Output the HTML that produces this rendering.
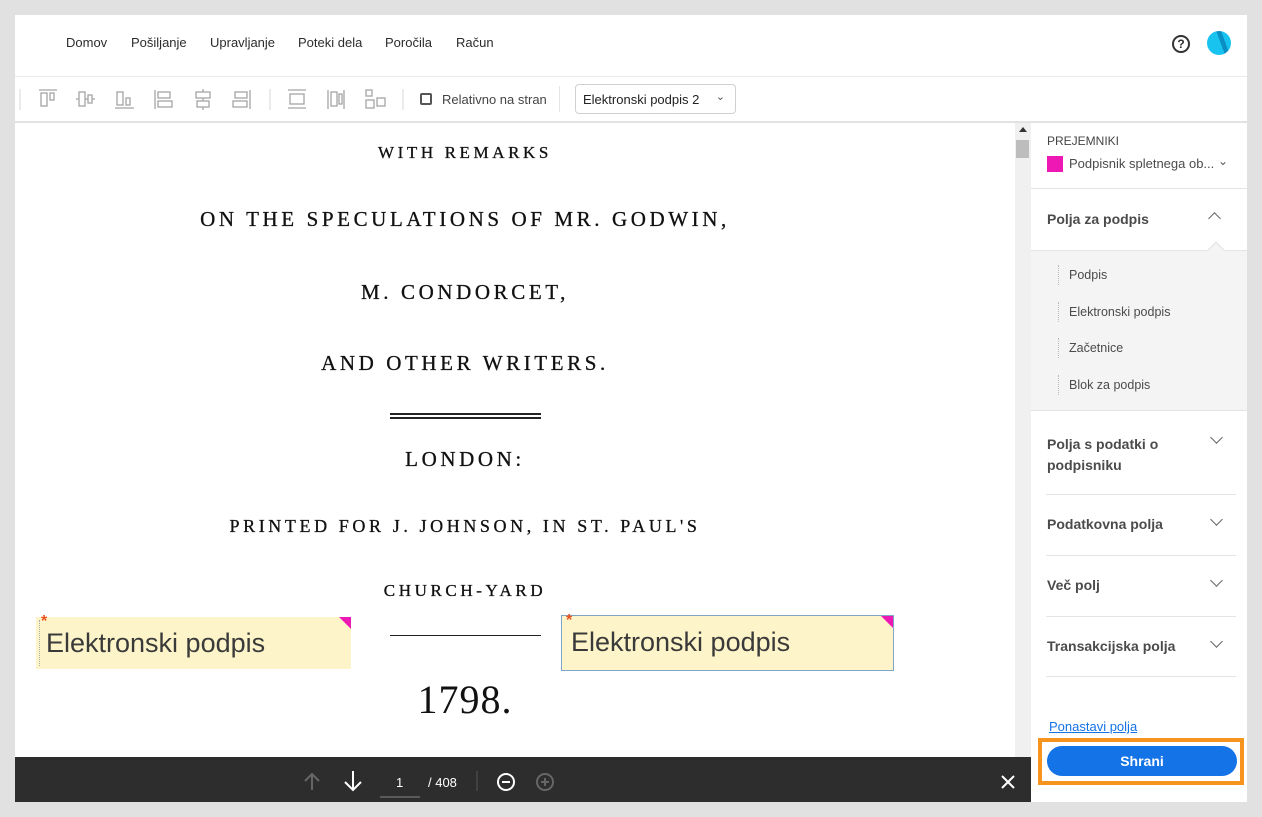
<!DOCTYPE html>
<html><head><meta charset="utf-8"><style>
*{margin:0;padding:0;box-sizing:border-box}
body{width:1262px;height:817px;background:#e1e1e1;position:relative;overflow:hidden;font-family:"Liberation Sans",sans-serif;color:#2c2c2c}
.abs{position:absolute}
.nav span{position:absolute;top:35px;font-size:13px;color:#2c2c2c}
.doc{font-family:"Liberation Serif",serif;color:#111;position:absolute;left:15px;width:900px;text-align:center;letter-spacing:3.6px;-webkit-text-stroke:0.3px #111}
.side{font-size:14px;color:#4b4b4b}
</style></head><body>
<div class="abs" style="left:15px;top:15px;width:1232px;height:62px;background:#fff;border-bottom:1px solid #eaeaea"></div>
<div class="nav">
<span style="left:66px">Domov</span><span style="left:131px">Pošiljanje</span><span style="left:210px">Upravljanje</span><span style="left:298px">Poteki dela</span><span style="left:385px">Poročila</span><span style="left:456px">Račun</span>
</div>
<div class="abs" style="left:1172px;top:35px;width:18px;height:18px;border:2px solid #333;border-radius:50%;font-size:12px;font-weight:bold;text-align:center;line-height:14px">?</div>
<div class="abs" style="left:1207px;top:31px;width:24px;height:24px;border-radius:50%;background:linear-gradient(70deg,#19c3f0 55%,#0a8fc4 55%,#0a8fc4 70%,#19c3f0 70%)"></div>
<div class="abs" style="left:15px;top:77px;width:1232px;height:45px;background:#fff;border-bottom:1px solid #e4e4e4"></div>
<svg class="abs" style="left:15px;top:77px" width="400" height="45" stroke="#a5a5a5" fill="none" stroke-width="1.3">
<line x1="5" y1="12" x2="5" y2="33" stroke="#e0e0e0"/>
<line x1="24" y1="13" x2="42" y2="13"/><rect x="26" y="16" width="6" height="13"/><rect x="35" y="16" width="4" height="7"/>
<line x1="61" y1="22" x2="80" y2="22"/><rect x="64" y="15" width="6" height="14" fill="#fff"/><rect x="73" y="18" width="4" height="8" fill="#fff"/>
<line x1="100" y1="31" x2="119" y2="31"/><rect x="102" y="15" width="6" height="13"/><rect x="111" y="21" width="4" height="7"/>
<line x1="140" y1="13" x2="140" y2="32"/><rect x="143" y="15" width="12" height="6"/><rect x="143" y="24" width="14" height="6"/>
<line x1="188" y1="12" x2="188" y2="33"/><rect x="181" y="15" width="14" height="6" fill="#fff"/><rect x="182" y="24" width="12" height="6" fill="#fff"/>
<line x1="235" y1="13" x2="235" y2="32"/><rect x="220" y="15" width="12" height="6"/><rect x="218" y="24" width="14" height="6"/>
<line x1="255" y1="12" x2="255" y2="33" stroke="#e0e0e0"/>
<line x1="273" y1="13" x2="291" y2="13"/><line x1="273" y1="31" x2="291" y2="31"/><rect x="275" y="17" width="14" height="10"/>
<line x1="313" y1="13" x2="313" y2="32"/><line x1="329" y1="13" x2="329" y2="32"/><rect x="316" y="15" width="6" height="14"/><rect x="324" y="17" width="3" height="10"/>
<rect x="351" y="13" width="6" height="6"/><rect x="351" y="23" width="8" height="8"/><rect x="362" y="21" width="8" height="8"/>
<line x1="388" y1="12" x2="388" y2="33" stroke="#e0e0e0"/>
</svg>
<div class="abs" style="left:420px;top:93px;width:12px;height:12px;border:2px solid #555;border-radius:2px"></div>
<div class="abs" style="left:442px;top:92px;font-size:13px;color:#444">Relativno na stran</div>
<div class="abs" style="left:559px;top:86px;width:1px;height:26px;background:#e4e4e4"></div>
<div class="abs" style="left:575px;top:84px;width:161px;height:30px;border:1px solid #d0d0d0;border-radius:4px;background:#fff;font-size:13px;padding:7px 7px;color:#222">Elektronski podpis 2<span style="position:absolute;right:10px;top:5px;color:#555;font-size:11px">&#8964;</span></div>
<div class="abs" style="left:15px;top:123px;width:1000px;height:634px;background:#fff"></div>
<div class="abs" style="left:1015px;top:123px;width:16px;height:634px;background:#f0f0f0"></div>
<div class="abs" style="left:1016px;top:140px;width:13px;height:18px;background:#bdbdbd"></div>
<div class="abs" style="left:1019px;top:127px;width:0;height:0;border-left:4px solid transparent;border-right:4px solid transparent;border-bottom:5px solid #333"></div>
<div class="doc" style="top:143px;font-size:17px">WITH REMARKS</div>
<div class="doc" style="top:207px;font-size:21px">ON THE SPECULATIONS OF MR. GODWIN,</div>
<div class="doc" style="top:280px;font-size:21px">M. CONDORCET,</div>
<div class="doc" style="top:351px;font-size:21px">AND OTHER WRITERS.</div>
<div class="abs" style="left:390px;top:413px;width:151px;height:2px;background:#222"></div>
<div class="abs" style="left:390px;top:417px;width:151px;height:2px;background:#222"></div>
<div class="doc" style="top:447px;font-size:21px">LONDON:</div>
<div class="doc" style="top:516px;font-size:18px">PRINTED FOR J. JOHNSON, IN ST. PAUL'S</div>
<div class="doc" style="top:581px;font-size:17px">CHURCH-YARD</div>
<div class="abs" style="left:390px;top:635px;width:151px;height:1px;background:#222"></div>
<div class="doc" style="top:676px;font-size:40px;letter-spacing:1px;-webkit-text-stroke:0">1798.</div>
<div class="abs" style="left:36px;top:617px;width:315px;height:52px;background:#fdf5c9"></div>
<div class="abs" style="left:39px;top:620px;width:1px;height:46px;border-left:1px dotted #aaa"></div>
<div class="abs" style="left:41px;top:613px;color:#e8521f;font-size:16px;font-weight:bold">*</div>
<div class="abs" style="left:46px;top:628px;font-size:27px;color:#3a3a3a">Elektronski podpis</div>
<div class="abs" style="left:339px;top:617px;border-top:12px solid #ee18b4;border-left:12px solid transparent"></div>
<div class="abs" style="left:561px;top:615px;width:333px;height:56px;background:#fdf5c9;border:1px solid #7fa6c9"></div>
<div class="abs" style="left:566px;top:612px;color:#e8521f;font-size:16px;font-weight:bold">*</div>
<div class="abs" style="left:571px;top:627px;font-size:27px;color:#3a3a3a">Elektronski podpis</div>
<div class="abs" style="left:881px;top:616px;border-top:12px solid #ee18b4;border-left:12px solid transparent"></div>
<div class="abs" style="left:15px;top:757px;width:1016px;height:45px;background:#2d2d2d"></div>
<svg class="abs" style="left:15px;top:757px" width="1016" height="45" fill="none" stroke-width="2">
<path d="M297 33V17M290 24l7-7 7 7" stroke="#666"/>
<path d="M338 14v18M330 25l8 8 8-8" stroke="#fff"/>
<line x1="365" y1="40" x2="405" y2="40" stroke="#888" stroke-width="1"/>
<line x1="462" y1="14" x2="462" y2="34" stroke="#555" stroke-width="1"/>
<circle cx="491" cy="25" r="8" stroke="#fff"/><line x1="487" y1="25" x2="495" y2="25" stroke="#fff"/>
<circle cx="530" cy="25" r="8" stroke="#666"/><path d="M526 25h8M530 21v8" stroke="#666"/>
<path d="M987 19l12 12M999 19l-12 12" stroke="#fff"/>
</svg>
<div class="abs" style="left:396px;top:775px;color:#fff;font-size:13px">1</div>
<div class="abs" style="left:428px;top:775px;color:#fff;font-size:13px">/ 408</div>
<div class="abs" style="left:1031px;top:123px;width:216px;height:679px;background:#fff"></div>
<div class="abs side" style="left:1047px;top:134px;font-size:12px;color:#444">PREJEMNIKI</div>
<div class="abs" style="left:1047px;top:156px;width:16px;height:16px;background:#ee18b4"></div>
<div class="abs side" style="left:1069px;top:156px;font-size:13px">Podpisnik spletnega ob...</div>
<div class="abs" style="left:1218px;top:154px;font-size:12px;color:#555">&#8964;</div>
<div class="abs" style="left:1031px;top:188px;width:216px;height:1px;background:#e4e4e4"></div>
<div class="abs side" style="left:1047px;top:211px;font-weight:bold;font-size:14px">Polja za podpis</div>
<div class="abs" style="left:1210px;top:214px;width:9px;height:9px;border-left:1.5px solid #666;border-top:1.5px solid #666;transform:rotate(45deg)"></div>
<div class="abs" style="left:1031px;top:250px;width:216px;height:161px;background:#f4f4f4;border-top:1px solid #e4e4e4;border-bottom:1px solid #e4e4e4"></div>
<div class="abs" style="left:1210px;top:244px;width:12px;height:12px;background:#f4f4f4;border-left:1px solid #e4e4e4;border-top:1px solid #e4e4e4;transform:rotate(45deg)"></div>
<div class="abs" style="left:1058px;top:265px;height:20px;border-left:1px dotted #bbb"></div>
<div class="abs" style="left:1058px;top:302px;height:20px;border-left:1px dotted #bbb"></div>
<div class="abs" style="left:1058px;top:338px;height:20px;border-left:1px dotted #bbb"></div>
<div class="abs" style="left:1058px;top:375px;height:20px;border-left:1px dotted #bbb"></div>
<div class="abs side" style="left:1069px;top:268px;font-size:12.5px">Podpis</div>
<div class="abs side" style="left:1069px;top:305px;font-size:12.5px">Elektronski podpis</div>
<div class="abs side" style="left:1069px;top:341px;font-size:12.5px">Začetnice</div>
<div class="abs side" style="left:1069px;top:378px;font-size:12.5px">Blok za podpis</div>
<div class="abs side" style="left:1047px;top:434px;font-weight:bold;line-height:21px">Polja s podatki o<br>podpisniku</div>
<div class="abs side" style="left:1047px;top:516px;font-weight:bold">Podatkovna polja</div>
<div class="abs side" style="left:1047px;top:577px;font-weight:bold">Več polj</div>
<div class="abs side" style="left:1047px;top:638px;font-weight:bold">Transakcijska polja</div>
<div class="abs" style="left:1046px;top:494px;width:190px;height:1px;background:#e4e4e4"></div>
<div class="abs" style="left:1046px;top:555px;width:190px;height:1px;background:#e4e4e4"></div>
<div class="abs" style="left:1046px;top:616px;width:190px;height:1px;background:#e4e4e4"></div>
<div class="abs" style="left:1046px;top:676px;width:190px;height:1px;background:#e4e4e4"></div>
<div class="abs" style="left:1212px;top:433px;width:9px;height:9px;border-right:1.5px solid #666;border-bottom:1.5px solid #666;transform:rotate(45deg)"></div>
<div class="abs" style="left:1212px;top:515px;width:9px;height:9px;border-right:1.5px solid #666;border-bottom:1.5px solid #666;transform:rotate(45deg)"></div>
<div class="abs" style="left:1212px;top:576px;width:9px;height:9px;border-right:1.5px solid #666;border-bottom:1.5px solid #666;transform:rotate(45deg)"></div>
<div class="abs" style="left:1212px;top:637px;width:9px;height:9px;border-right:1.5px solid #666;border-bottom:1.5px solid #666;transform:rotate(45deg)"></div>
<div class="abs" style="left:1049px;top:719px;font-size:13px;color:#1473e6;text-decoration:underline">Ponastavi polja</div>
<div class="abs" style="left:1038px;top:738px;width:206px;height:47px;border:4px solid #f7941d"></div>
<div class="abs" style="left:1047px;top:746px;width:190px;height:30px;border-radius:15px;background:#1473e6;color:#fff;font-size:14px;font-weight:bold;text-align:center;line-height:30px">Shrani</div>
</body></html>
